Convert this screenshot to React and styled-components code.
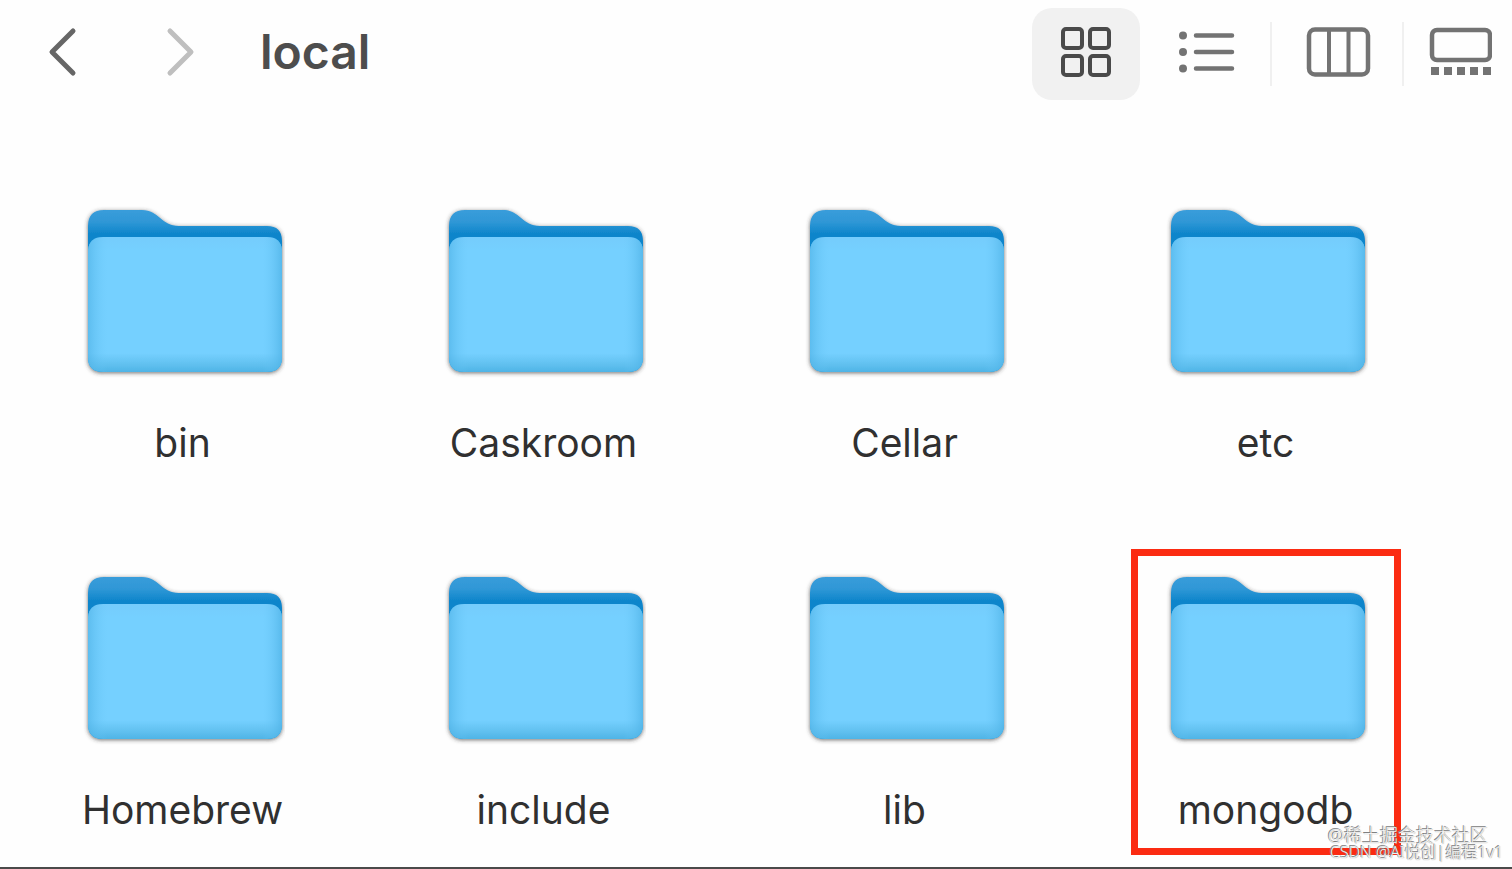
import React from "react";
import styled, { createGlobalStyle } from "styled-components";

const GlobalStyle = createGlobalStyle`
  * {
    box-sizing: border-box;
  }

  body {
    margin: 0;
    background: #fefefe;
    font-family: Inter, "Noto Sans CJK SC", sans-serif;
  }

  button {
    border: 0;
    padding: 0;
    background: none;
    font: inherit;
    color: inherit;
  }
`;

const Window = styled.div`
  position: relative;
  min-height: 100vh;
  border-bottom: 2px solid #4a4a4a;
  overflow: hidden;
`;

const Toolbar = styled.header`
  display: flex;
  align-items: center;
  height: 104px;
  padding-left: 2px;
`;

const NavButton = styled.button`
  display: flex;
  align-items: center;
  justify-content: center;
  width: 118px;
  height: 92px;
  color: ${({ disabled }) => (disabled ? "#bfbfbf" : "#666")};
`;

const Title = styled.h1`
  margin: 0 auto 0 22px;
  font-size: 48px;
  line-height: 56px;
  font-weight: 600;
  color: #4d4d4d;
`;

const Views = styled.div`
  display: flex;
  align-items: center;
  margin-top: 4px;
`;

const ViewButton = styled.button`
  display: flex;
  align-items: center;
  justify-content: center;
  width: ${({ $wide }) => ($wide ? 130 : 108)}px;
  height: 92px;
  border-radius: 20px;
  color: ${({ $active }) => ($active ? "#4a4a4a" : "#737373")};
  background: ${({ $active }) => ($active ? "#f1f1f1" : "transparent")};
`;

const Divider = styled.span`
  width: 2px;
  height: 64px;
  background: #f0f0f0;
`;

const Files = styled.ul`
  display: grid;
  grid-template-columns: repeat(4, 1fr);
  row-gap: 61px;
  margin: 0;
  padding: 78px 66px 12px 2px;
  list-style: none;
  justify-items: center;
`;

const Item = styled.button`
  display: flex;
  flex-direction: column;
  align-items: center;
  width: 270px;
  height: 306px;
  padding-top: 15px;
  border: 7px solid ${({ $marked }) => ($marked ? "#fb2b12" : "transparent")};
`;

const Name = styled.span`
  margin-top: 39px;
  font-size: 39px;
  line-height: 48px;
  color: #303030;
`;

const Watermark = styled.div`
  position: absolute;
  right: 12px;
  bottom: 6px;
  width: 172px;
  font-family: "Noto Sans", "Noto Sans CJK SC", sans-serif;
  font-weight: 300;
  white-space: nowrap;
  color: #f4f4f4;
  text-shadow: -1px -1px 0 #808080, 0 0 1px #777;
`;

const Mark = styled.div`
  padding-left: ${({ $small }) => ($small ? 2 : 0)}px;
  font-size: ${({ $small }) => ($small ? 16 : 18)}px;
  line-height: 17px;
`;

const Chevron = ({ d }) => (
  <svg width="32" height="52" viewBox="0 0 32 52" fill="none" stroke="currentColor" strokeWidth="5" strokeLinecap="round" strokeLinejoin="round">
    <path d={d} />
  </svg>
);

const ViewIcon = ({ children }) => (
  <svg width="68" height="56" viewBox="0 0 68 56" fill="none" stroke="currentColor" strokeWidth="4">
    {children}
  </svg>
);

// gradients are shared by every folder
const FolderDefs = () => (
  <svg width="0" height="0" style={{ position: "absolute" }} aria-hidden="true">
    <defs>
      <linearGradient id="back" x1="0" y1="0" x2="0" y2="40" gradientUnits="userSpaceOnUse">
        <stop offset="0.1" stopColor="#3b9edb" />
        <stop offset="0.45" stopColor="#2f97d6" />
        <stop offset="0.75" stopColor="#0d85cb" />
      </linearGradient>
      <linearGradient id="front" x1="0" y1="0" x2="0" y2="1">
        <stop offset="0" stopColor="#74ccfc" />
        <stop offset="0.1" stopColor="#75d0ff" />
        <stop offset="0.86" stopColor="#75d0ff" />
        <stop offset="0.94" stopColor="#62c1f0" />
        <stop offset="1" stopColor="#4fb4e6" />
      </linearGradient>
      <linearGradient id="sides" x1="0" y1="0" x2="1" y2="0">
        <stop offset="0" stopColor="#4cb0e4" stopOpacity="0.6" />
        <stop offset="0.1" stopColor="#6bc8f8" stopOpacity="0" />
        <stop offset="0.9" stopColor="#6bc8f8" stopOpacity="0" />
        <stop offset="1" stopColor="#4cb0e4" stopOpacity="0.7" />
      </linearGradient>
      <filter id="shade" x="-5%" y="-5%" width="110%" height="112%">
        <feDropShadow dx="0" dy="1" stdDeviation="2" floodColor="#333" floodOpacity="0.7" />
      </filter>
    </defs>
  </svg>
);

const front = "M3 46 C4 37 9 33 18 33 H182 C191 33 196 37 197 46 V153 Q197 168 182 168 H18 Q3 168 3 153 Z";

const Folder = () => (
  <svg width="204" height="176" viewBox="-4 0 204 176" aria-hidden="true">
    <g filter="url(#shade)">
      <path d="M3 22 Q3 6 19 6 H57 C74 6 76 22 94 22 H182 Q197 22 197 37 V153 Q197 168 182 168 H18 Q3 168 3 153 Z" fill="url(#back)" />
      <path d={front} fill="url(#front)" />
    </g>
    <path d={front} fill="url(#sides)" />
  </svg>
);

const folders = ["bin", "Caskroom", "Cellar", "etc", "Homebrew", "include", "lib", "mongodb"];

const App = () => (
  <Window>
    <GlobalStyle />
    <FolderDefs />
    <Toolbar>
      <NavButton aria-label="Back">
        <Chevron d="M28 5 L7 26 L28 47" />
      </NavButton>
      <NavButton aria-label="Forward" disabled>
        <Chevron d="M7 5 L28 26 L7 47" />
      </NavButton>
      <Title>local</Title>
      <Views>
        <ViewButton $active aria-label="Icons">
          <ViewIcon>
            <rect x="11" y="3" width="19" height="19" rx="3" />
            <rect x="38" y="3" width="19" height="19" rx="3" />
            <rect x="11" y="30" width="19" height="19" rx="3" />
            <rect x="38" y="30" width="19" height="19" rx="3" />
          </ViewIcon>
        </ViewButton>
        <ViewButton $wide aria-label="List">
          <ViewIcon>
            <path d="M25 9.5 H61 M25 26 H61 M25 42.5 H61" strokeWidth="4.5" strokeLinecap="round" />
            <path d="M12 9.5 h0 M12 26 h0 M12 42.5 h0" strokeWidth="8" strokeLinecap="round" />
          </ViewIcon>
        </ViewButton>
        <Divider />
        <ViewButton $wide aria-label="Columns">
          <ViewIcon>
            <rect x="6" y="3.5" width="59" height="45" rx="6" strokeWidth="4.5" />
            <path d="M26 4 V49 M45.5 4 V49" />
          </ViewIcon>
        </ViewButton>
        <Divider />
        <ViewButton aria-label="Gallery">
          <ViewIcon>
            <rect x="8" y="4" width="58" height="30" rx="5" strokeWidth="4.5" />
            <path d="M7 45 H67" strokeWidth="8" strokeDasharray="8 5" />
          </ViewIcon>
        </ViewButton>
      </Views>
    </Toolbar>
    <Files>
      {folders.map((name) => (
        <li key={name}>
          <Item $marked={name === "mongodb"}>
            <Folder />
            <Name>{name}</Name>
          </Item>
        </li>
      ))}
    </Files>
    <Watermark>
      <Mark>@稀土掘金技术社区</Mark>
      <Mark $small>CSDN @AI悦创|编程1v1</Mark>
    </Watermark>
  </Window>
);

export default App;
